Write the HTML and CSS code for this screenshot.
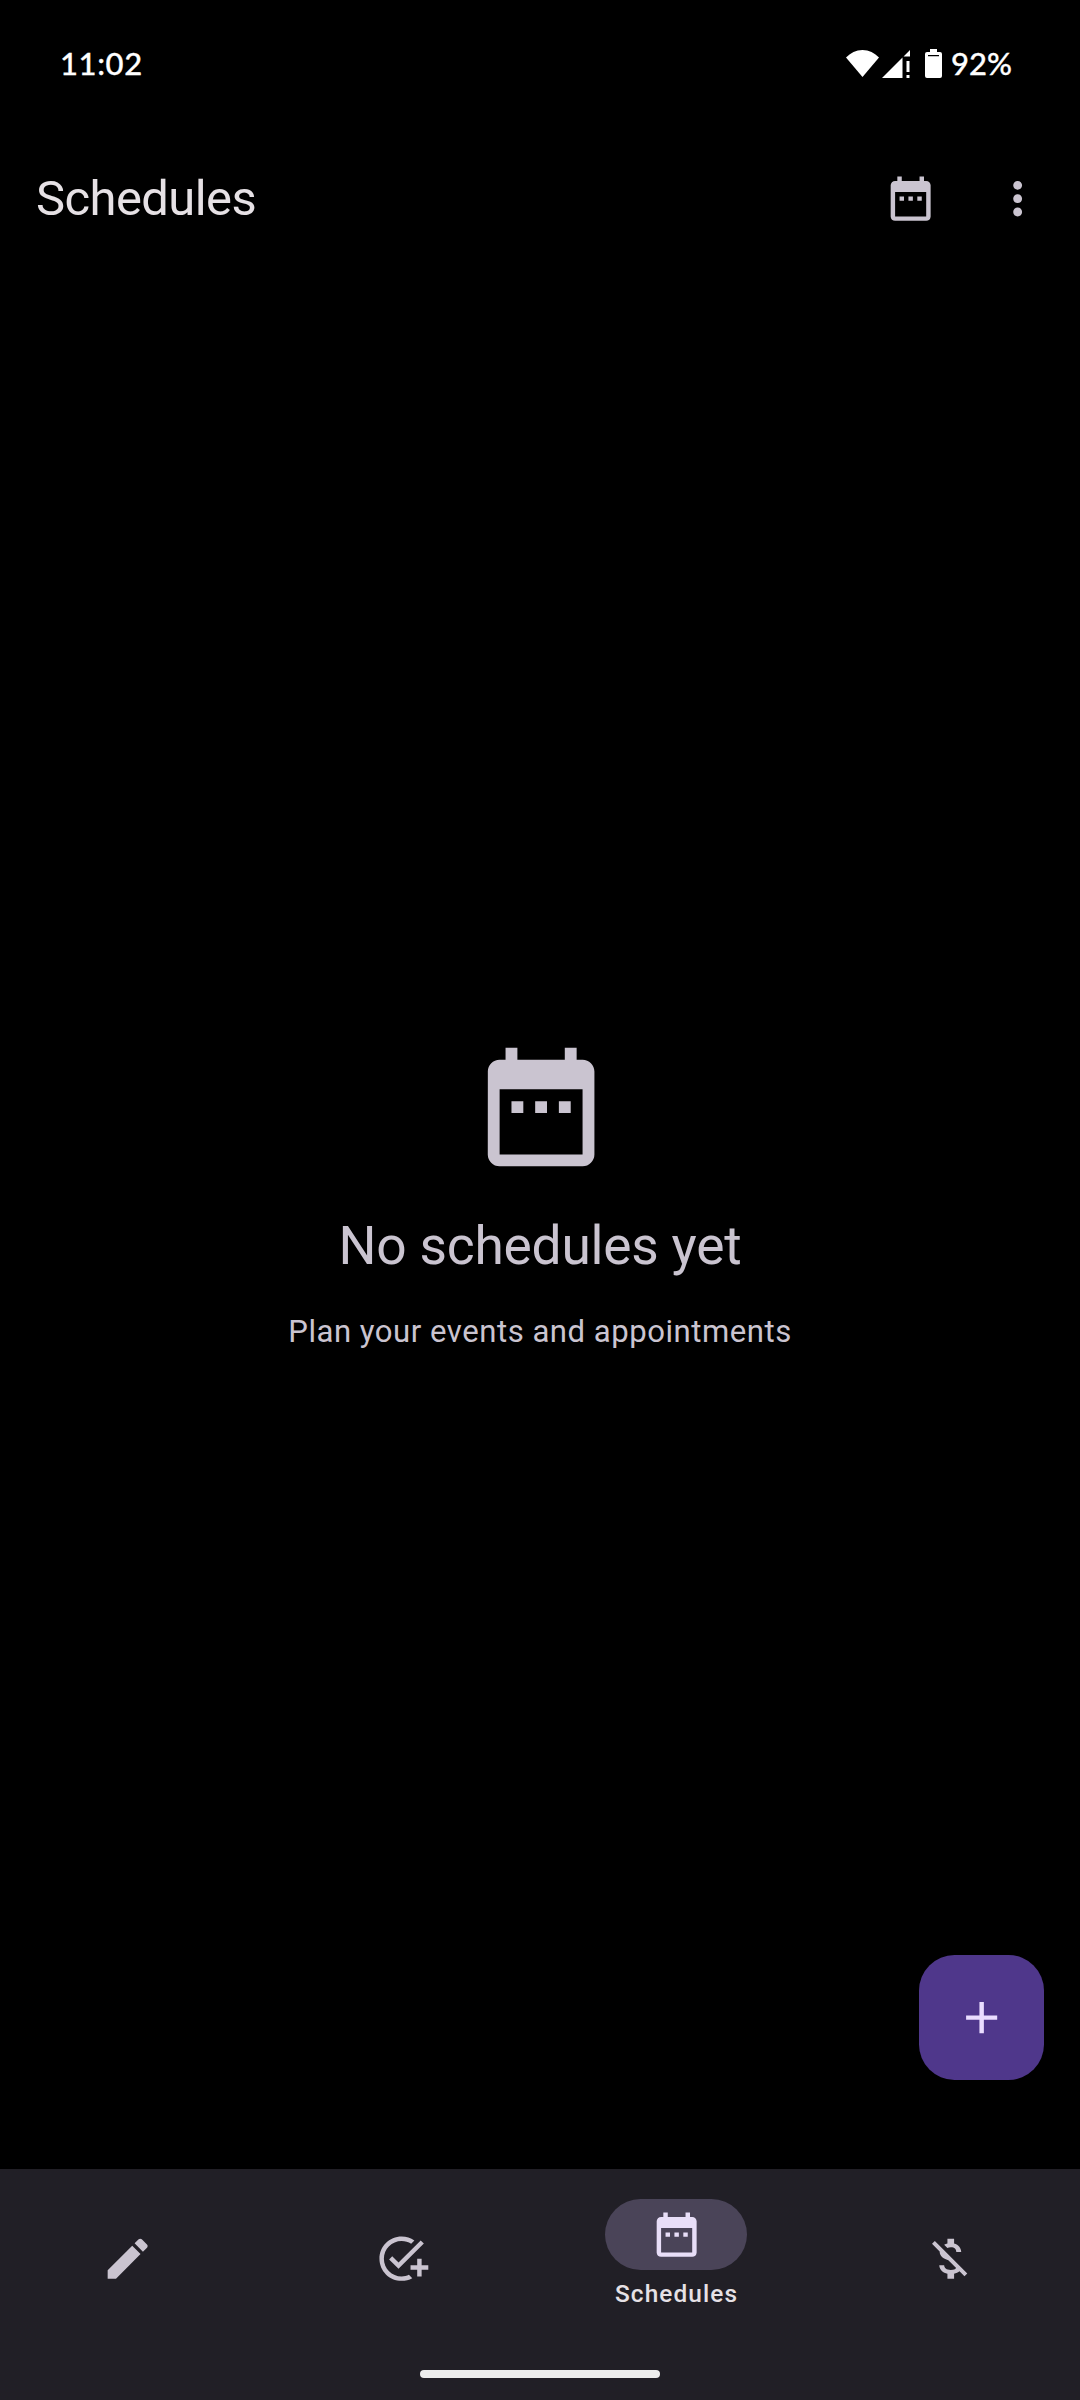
FILE: index.html
```html
<!DOCTYPE html>
<html lang="en">
<head>
<meta charset="utf-8">
<title>Schedules</title>
<link rel="stylesheet" href="styles.css">
</head>
<body>
<svg class="defs" aria-hidden="true">
  <symbol id="calendar" viewBox="0 0 24 24"><path d="M9 11H7v2h2v-2zM13 11h-2v2h2v-2zM17 11h-2v2h2v-2zM19 4h-1V2h-2v2H8V2H6v2H5C3.89 4 3.01 4.9 3.01 6L3 20c0 1.1.89 2 2 2h14c1.1 0 2-.9 2-2V6c0-1.1-.9-2-2-2zM19 20H5V9h14v11z"/></symbol>
</svg>
<div class="screen">
  <header class="status">
    <span class="clock">11:02</span>
    <div class="status-icons">
      <svg class="wifi" viewBox="0 0 33 27"><path d="M0 7.5C4.500 3 10 0 16.500 0S28.500 3 33 7.500L16.500 27z"/></svg>
      <svg class="signal" viewBox="0 0 28 28"><path d="M0 28L20.500 7.500V28zM21.500 6.500L28 0V6.500zM24.500 11h3v11h-3zM24.500 25h3v3h-3z"/></svg>
      <svg class="battery" viewBox="0 0 17 29"><path fill-rule="evenodd" d="M5 0h7v3h3a2 2 0 0 1 2 2v22a2 2 0 0 1-2 2H2a2 2 0 0 1-2-2V5a2 2 0 0 1 2-2h3zM3 6v1.300h11V6z"/></svg>
      <span class="percent">92%</span>
    </div>
  </header>
  <div class="app-bar">
    <h1 class="title">Schedules</h1>
    <div class="actions">
      <svg class="icon"><use href="#calendar"/></svg>
      <svg class="icon" viewBox="0 0 24 24"><path d="M12 8c1.100 0 2-.9 2-2s-.9-2-2-2-2 .9-2 2 .9 2 2 2zm0 2c-1.100 0-2 .9-2 2s.9 2 2 2 2-.9 2-2-.9-2-2-2zm0 6c-1.100 0-2 .9-2 2s.9 2 2 2 2-.9 2-2-.9-2-2-2z"/></svg>
    </div>
  </div>
  <main class="empty">
    <svg class="empty-icon"><use href="#calendar"/></svg>
    <h2 class="empty-title">No schedules yet</h2>
    <p class="empty-text">Plan your events and appointments</p>
    <button class="fab" aria-label="Add"><svg class="icon" viewBox="0 0 24 24"><path d="M19 13h-6v6h-2v-6H5v-2h6V5h2v6h6v2z"/></svg></button>
  </main>
  <nav class="nav">
    <div class="tabs">
      <div class="tab"><svg class="icon" viewBox="0 0 24 24"><path d="M3 17.250V21h3.750L17.810 9.940l-3.750-3.750L3 17.250zM20.710 7.040c.39-.39.39-1.020 0-1.410l-2.340-2.340c-.39-.39-1.020-.39-1.410 0l-1.830 1.830 3.750 3.750 1.830-1.830z"/></svg></div>
      <div class="tab"><svg class="icon" viewBox="0 0 24 24"><path d="M22 5.180L10.590 16.600l-4.240-4.240 1.410-1.410 2.830 2.830 10-10L22 5.180zM12 20c-4.410 0-8-3.590-8-8s3.590-8 8-8c1.570 0 3.040.46 4.280 1.250l1.450-1.450C16.100 2.670 14.130 2 12 2 6.480 2 2 6.480 2 12s4.480 10 10 10c1.730 0 3.360-.44 4.780-1.220l-1.500-1.500c-1 .46-2.110.72-3.280.72zM19 15h-3v2h3v3h2v-3h3v-2h-3v-3h-2v3z"/></svg></div>
      <div class="tab tab-active">
        <span class="pill"><svg class="icon"><use href="#calendar"/></svg></span>
        <span class="tab-label">Schedules</span>
      </div>
      <div class="tab"><svg class="icon" viewBox="0 0 24 24"><path d="M12.500 6.900c1.780 0 2.440.85 2.500 2.100h2.210c-.07-1.720-1.120-3.300-3.210-3.810V3h-3v2.160c-.53.12-1.030.3-1.480.54l1.470 1.470c.41-.17.91-.27 1.510-.27zM5.330 4.060L4.060 5.330 7.500 8.770c0 2.080 1.560 3.210 3.910 3.910l3.510 3.510c-.34.48-1.050.91-2.420.91-2.060 0-2.870-.92-2.980-2.100h-2.200c.12 2.190 1.760 3.420 3.680 3.830V21h3v-2.150c.96-.18 1.820-.55 2.450-1.120l2.220 2.220 1.270-1.270L5.330 4.060z"/></svg></div>
    </div>
    <div class="home-bar"></div>
  </nav>
</div>
</body>
</html>
```
FILE: styles.css
```css
* { box-sizing: border-box; margin: 0; }
body { background: #000; font-family: Roboto, sans-serif; }
svg { display: block; fill: currentColor; flex: none; }
.defs { display: none; }
.screen { position: relative; display: flex; flex-direction: column; width: 1080px; height: 2400px; color: #cac4d0; }

.status { display: flex; justify-content: space-between; align-items: center; height: 128px; padding: 0 68px 2px 60px; color: #fff; font: 500 31px/40px Lato, sans-serif; -webkit-text-stroke: 0.3px #fff; }
.status svg { stroke: none; }
.clock { letter-spacing: 0.6px; }
.status-icons { display: flex; align-items: center; }
.wifi { width: 33px; height: 27px; }
.signal { width: 28px; height: 28px; margin: 2px 0 0 3px; }
.battery { width: 17px; height: 29px; margin: 1px 9px 0 15px; }

.app-bar { display: flex; align-items: center; justify-content: space-between; height: 142px; padding: 0 36px; }
.title { font-weight: 400; font-size: 48.9px; line-height: 62px; letter-spacing: -0.55px; color: #e6e1e5; }
.actions { display: flex; gap: 53.4px; }
.icon { width: 53.3px; height: 53.3px; }

.empty { position: relative; flex: 1; display: flex; flex-direction: column; align-items: center; padding-top: 766.3px; }
.empty-icon { width: 142.2px; height: 142.2px; margin-left: 2px; }
.empty-title { margin-top: 32.5px; font-weight: 400; font-size: 53.3px; line-height: 71px; letter-spacing: -0.22px; }
.empty-text { margin-top: 28px; font-size: 31.1px; line-height: 44.4px; letter-spacing: 0.52px; }

.fab { position: absolute; right: 36px; bottom: 89px; display: grid; place-items: center; width: 125px; height: 125px; padding: 0; border: 0; border-radius: 35.5px; background: #4f378b; color: #eaddff; }

.nav { display: flex; flex-direction: column; align-items: center; height: 231px; background: #211f26; }
.tabs { display: grid; grid-template-columns: repeat(4, 1fr); column-gap: 18.2px; width: 1080px; height: 178px; padding-right: 2px; }
.tab { display: flex; flex-direction: column; align-items: center; justify-content: center; padding-top: 1px; }
.tab-active { justify-content: flex-start; padding-top: 30px; color: #e8def8; }
.pill { display: grid; place-items: center; width: 142px; height: 71px; padding-left: 1px; border-radius: 36px; background: #4a4458; }
.tab-label { margin: 6px 0 0 1px; font-weight: 500; font-size: 24.4px; line-height: 35px; letter-spacing: 1.1px; color: #e6e1e5; }
.home-bar { width: 240px; height: 8px; margin-top: 23px; border-radius: 4px; background: #ececec; }
```
